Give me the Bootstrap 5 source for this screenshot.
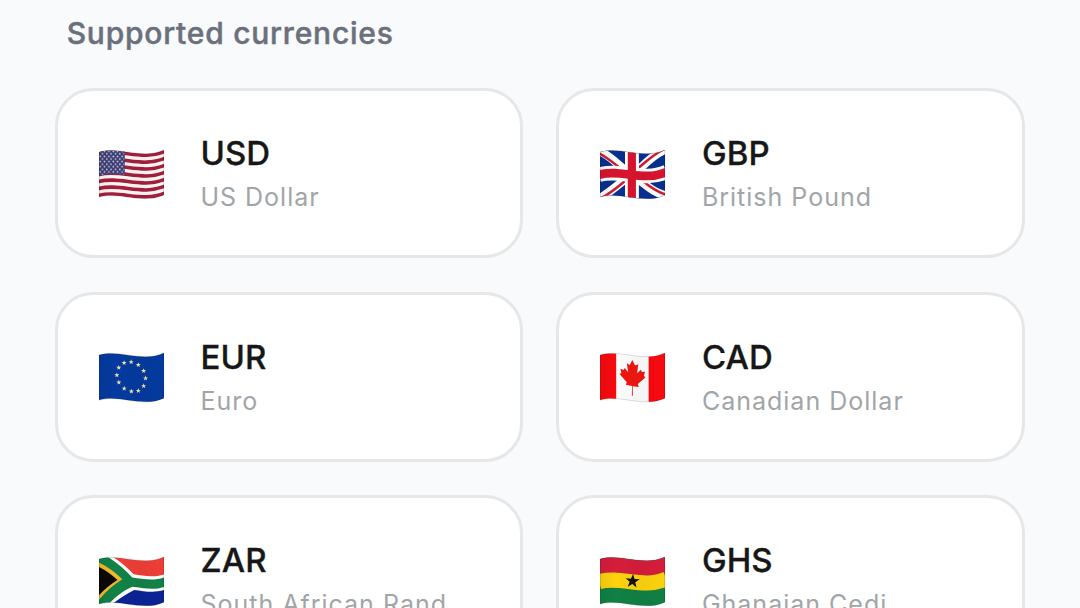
<!DOCTYPE html>
<html lang="en">
<head>
<meta charset="utf-8">
<meta name="viewport" content="width=device-width, initial-scale=1">
<title>Supported currencies</title>
<link href="https://cdn.jsdelivr.net/npm/bootstrap@5.3.0/dist/css/bootstrap.min.css" rel="stylesheet">
<style>
  html, body { height: 100%; }
  body { background: #f8fafc; font-family: Inter, "Liberation Sans", sans-serif; }
  .page { height: 608px; padding: 12px 55.1px 0 54.9px; }
  .section-title { font-size: 30px; line-height: 42px; font-weight: 500; letter-spacing: .77px; color: #6b707b; -webkit-text-stroke: .45px #6b707b; margin: 0 0 34px 11.8px; }
  .currencies { --bs-gutter-x: 33px; --bs-gutter-y: 33.6px; }
  .currency { height: 170px; border: 3px solid #e5e7e9; border-radius: 38px; padding: 4px 41px 0; }
  .flag { width: 65.5px; height: 51.6px; margin: -3px 36px 0 0; flex: none; }
  .code { font-size: 33px; line-height: 44px; font-weight: 500; color: #171717; -webkit-text-stroke: .3px #171717; letter-spacing: .1px; }
  .title { font-size: 25px; line-height: 44px; letter-spacing: 1px; color: #a1a5a8; white-space: nowrap; }
</style>
</head>
<body>
<svg width="0" height="0" class="position-absolute" aria-hidden="true">
  <defs>
    <path id="wave" d="M-1 2.2C22-4 43 10 67-.6" fill="none"/>
    <clipPath id="cloth"><path d="M0 2C22-4 43 10 65.5 0V45.5C43 55.5 22 41.5 0 47.5Z"/></clipPath>
    <path id="edge" d="M.3 2C22-4 43 10 65.2 0V45.5C43 55.5 22 41.5.3 47.5Z" fill="none" stroke="#000" stroke-opacity=".2" stroke-width=".7"/>
    <linearGradient id="shade"><stop offset="0" stop-color="#000" stop-opacity=".06"/><stop offset=".25" stop-color="#000" stop-opacity="0"/><stop offset=".65" stop-color="#000" stop-opacity=".03"/><stop offset="1" stop-color="#000" stop-opacity="0"/></linearGradient>
    <path id="star" d="M0-1 .24-.31.95-.31.38.12.59.81 0 .4-.59.81-.38.12-.95-.31-.24-.31Z"/>
    <pattern id="stars" width="4.4" height="5.2" patternUnits="userSpaceOnUse"><g fill="#e6e8f5"><circle cx="1.2" cy="1.3" r=".8"/><circle cx="3.4" cy="3.9" r=".8"/></g></pattern>
  </defs>
</svg>

<main class="page overflow-hidden">
  <h1 class="section-title">Supported currencies</h1>
  <div class="row row-cols-2 currencies">

    <div class="col"><div class="currency bg-white d-flex align-items-center">
      <svg class="flag" viewBox="0 -2 66 52"><g clip-path="url(#cloth)">
        <path fill="#fff6f5" d="M0-3h66v55H0z"/>
        <g stroke="#a31f3c" stroke-width="3.55"><use href="#wave" y="1.75"/><use href="#wave" y="8.75"/><use href="#wave" y="15.75"/><use href="#wave" y="22.75"/><use href="#wave" y="29.75"/><use href="#wave" y="36.75"/><use href="#wave" y="43.75"/></g>
        <path fill="#3d3c74" d="M0-2h26V25.6C17 23.4 9 23.8 0 26.5Z"/><path fill="url(#stars)" d="M0 1h25.5V25C17 23 9 23 0 25.8Z"/>
        <path fill="url(#shade)" d="M0-3h66v55H0z"/></g><use href="#edge"/></svg>
      <div><div class="code">USD</div><div class="title">US Dollar</div></div>
    </div></div>

    <div class="col"><div class="currency bg-white d-flex align-items-center">
      <svg class="flag" viewBox="0 -2 66 52"><g clip-path="url(#cloth)">
        <path fill="#07308f" d="M0-3h66v55H0z"/>
        <g fill="none"><path stroke="#fff" stroke-width="8.4" d="M-1 1C13 7 20 18 32 25S52 43 67 46M-1 49C13 41 22 31 32 25S51 5 67-1"/>
        <path stroke="#d01b32" stroke-width="2.5" d="M-2 3C11 9 19 19 31 26M33 24C44 30 51 41 67 45M-2 50C12 44 22 33 32 26M31 24C43 16 50 6 67-2"/></g>
        <path fill="#fff" d="M25.2-2h14v52h-14z"/><use href="#wave" y="22.7" stroke="#fff" stroke-width="14.6"/>
        <path fill="#d8142f" d="M28-2h8.2v52H28z"/><use href="#wave" y="22.7" stroke="#d8142f" stroke-width="8.8"/>
        <path fill="url(#shade)" d="M0-3h66v55H0z"/></g><use href="#edge"/></svg>
      <div><div class="code">GBP</div><div class="title">British Pound</div></div>
    </div></div>

    <div class="col"><div class="currency bg-white d-flex align-items-center">
      <svg class="flag" viewBox="0 -2 66 52"><g clip-path="url(#cloth)">
        <path fill="#043a9f" d="M0-3h66v55H0z"/><path fill="url(#shade)" d="M0-3h66v55H0z"/></g><use href="#edge"/>
        <g fill="#f0e29a">
          <use href="#star" transform="translate(32.4 9.1) scale(2.7)"/><use href="#star" transform="translate(39.6 12) scale(2.7)"/><use href="#star" transform="translate(45 18.1) scale(2.7)"/><use href="#star" transform="translate(46.9 25.5) scale(2.7)"/><use href="#star" transform="translate(45 33.3) scale(2.7)"/><use href="#star" transform="translate(39.6 38.1) scale(2.7)"/><use href="#star" transform="translate(32.6 38.7) scale(2.7)"/><use href="#star" transform="translate(25.4 35.8) scale(2.7)"/><use href="#star" transform="translate(20 29.7) scale(2.7)"/><use href="#star" transform="translate(18 22.3) scale(2.7)"/><use href="#star" transform="translate(19.9 14.7) scale(2.7)"/><use href="#star" transform="translate(25.3 9.9) scale(2.7)"/>
        </g></svg>
      <div><div class="code">EUR</div><div class="title">Euro</div></div>
    </div></div>

    <div class="col"><div class="currency bg-white d-flex align-items-center">
      <svg class="flag" viewBox="0 -2 66 52"><g clip-path="url(#cloth)">
        <path fill="#fdfcfc" d="M0-3h66v55H0z"/><path fill="#f70a10" d="M0-3h16.3v55H0zM49-3h17v55H49z"/>
        <path fill="#ee1711" d="M32.5 7 35.4 12.5 38.6 11.4 37.4 20.4 41.2 16.9 42.2 19.1 45.4 18.9 44.2 22.9 45.7 24.8 38.1 31.2 39 34.2 32.9 33.5 33.1 43H32.1L32.3 33.4 26 32 27 29.5 19.7 21.3 21.5 20.2 20.6 16 23.7 17.1 24.9 15.2 28.4 19.5 27.1 10.4 30 12.2Z"/>
        <path fill="url(#shade)" d="M0-3h66v55H0z"/></g><use href="#edge"/></svg>
      <div><div class="code">CAD</div><div class="title">Canadian Dollar</div></div>
    </div></div>

    <div class="col"><div class="currency bg-white d-flex align-items-center">
      <svg class="flag" viewBox="0 -2 66 52"><g clip-path="url(#cloth)">
        <path fill="#fff" d="M0-3h66v55H0z"/>
        <path fill="#ee3e36" d="M14-3H66V17.5C55 21 45 19 35 17.5Q25 7 14 0Z"/>
        <path fill="#0b2395" d="M66 33.2C55 36.8 45 34.2 35.5 33.2Q26 38 15 46V52H66Z"/>
        <path fill="#118247" d="M0 0H9Q23 9 33.5 20.7C44 22 55 24.5 66 20.5V30C55 34 44 31 33.5 30Q22 35 11 46L9 49H0Z"/>
        <path fill="#f7b72b" d="M0 5.6Q13 12 23.5 22.5Q11 30 0 43Z"/><path fill="#0b0907" d="M0 10Q10 15 18.7 23.2Q9 29 0 38.5Z"/>
        <path fill="url(#shade)" d="M0-3h66v55H0z"/></g><use href="#edge"/></svg>
      <div><div class="code">ZAR</div><div class="title">South African Rand</div></div>
    </div></div>

    <div class="col"><div class="currency bg-white d-flex align-items-center">
      <svg class="flag" viewBox="0 -2 66 52"><g clip-path="url(#cloth)">
        <path fill="#118044" d="M0-3h66v55H0z"/><use href="#wave" y="6.8" stroke="#d51d3b" stroke-width="17"/><use href="#wave" y="22.7" stroke="#fcd20d" stroke-width="15.3"/>
        <use href="#star" transform="translate(32.8 24.3) rotate(4) scale(7.5)" fill="#12100b"/>
        <path fill="url(#shade)" d="M0-3h66v55H0z"/></g><use href="#edge"/></svg>
      <div><div class="code">GHS</div><div class="title">Ghanaian Cedi</div></div>
    </div></div>

  </div>
</main>
<script src="https://cdn.jsdelivr.net/npm/bootstrap@5.3.0/dist/js/bootstrap.bundle.min.js"></script>
</body>
</html>
